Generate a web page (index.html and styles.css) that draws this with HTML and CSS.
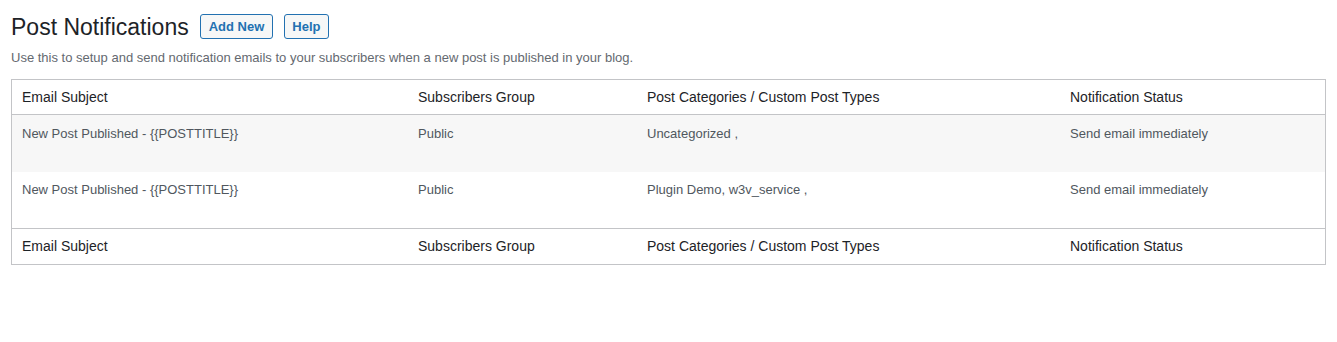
FILE: index.html
```html
<!DOCTYPE html>
<html>
<head>
<meta charset="utf-8">
<link rel="stylesheet" href="styles.css">
</head>
<body>
<div class="wrap">
  <div class="heading">
    <h1 class="title">Post Notifications</h1>
    <a class="action">Add New</a>
    <a class="action">Help</a>
  </div>
  <p class="desc">Use this to setup and send notification emails to your subscribers when a new post is published in your blog.</p>
  <table class="list">
    <colgroup><col class="c1"><col class="c2"><col class="c3"><col class="c4"></colgroup>
    <thead>
      <tr><th>Email Subject</th><th>Subscribers Group</th><th>Post Categories / Custom Post Types</th><th>Notification Status</th></tr>
    </thead>
    <tbody>
      <tr class="alt"><td>New Post Published - {{POSTTITLE}}</td><td>Public</td><td>Uncategorized ,</td><td>Send email immediately</td></tr>
      <tr class="row2"><td>New Post Published - {{POSTTITLE}}</td><td>Public</td><td>Plugin Demo, w3v_service ,</td><td>Send email immediately</td></tr>
    </tbody>
    <tfoot>
      <tr><th>Email Subject</th><th>Subscribers Group</th><th>Post Categories / Custom Post Types</th><th>Notification Status</th></tr>
    </tfoot>
  </table>
</div>
</body>
</html>
```
FILE: styles.css
```css
html, body { margin: 0; padding: 0; background: #fff; }
body { font-family: "Liberation Sans", Arial, sans-serif; color: #3c434a; }
.wrap { padding: 10px 11px 0 11px; }
.heading { display: flex; align-items: center; gap: 11px; height: 33px; }
.title { margin: 0; font-size: 23px; font-weight: 400; color: #1d2327; line-height: 32px; }
.action {
  display: inline-block; box-sizing: border-box; height: 25px; line-height: 23px;
  padding: 0 8px; font-size: 13px; font-weight: 700; color: #2271b1;
  border: 1px solid #2271b1; border-radius: 3px; background: #f6f7f7;
}
.action + .action { padding: 0 7px; }
.desc { margin: 6px 0 0 0; font-size: 13px; line-height: 18px; color: #646970; }
.list {
  margin-top: 12px; width: 100%; table-layout: fixed;
  border-collapse: separate; border-spacing: 0; border: 1px solid #c3c4c7;
}
.c1 { width: 396px; }
.c2 { width: 229px; }
.c3 { width: 423px; }
.list th { text-align: left; font-weight: 400; font-size: 14px; color: #1d2327; line-height: 19px; padding: 8px 10px; }
.list thead th { padding: 8px 10px 7px 10px; border-bottom: 1px solid #c3c4c7; }
.list tfoot th { padding: 8px 10px 8px 10px; border-top: 1px solid #c3c4c7; }
.list td { font-size: 13px; color: #50575e; vertical-align: top; line-height: 19px; padding: 9px 10px 29px 10px; }
.list tr.row2 td { padding: 8px 10px 29px 10px; }
.list tr.alt td { background: #f7f7f7; }
```
